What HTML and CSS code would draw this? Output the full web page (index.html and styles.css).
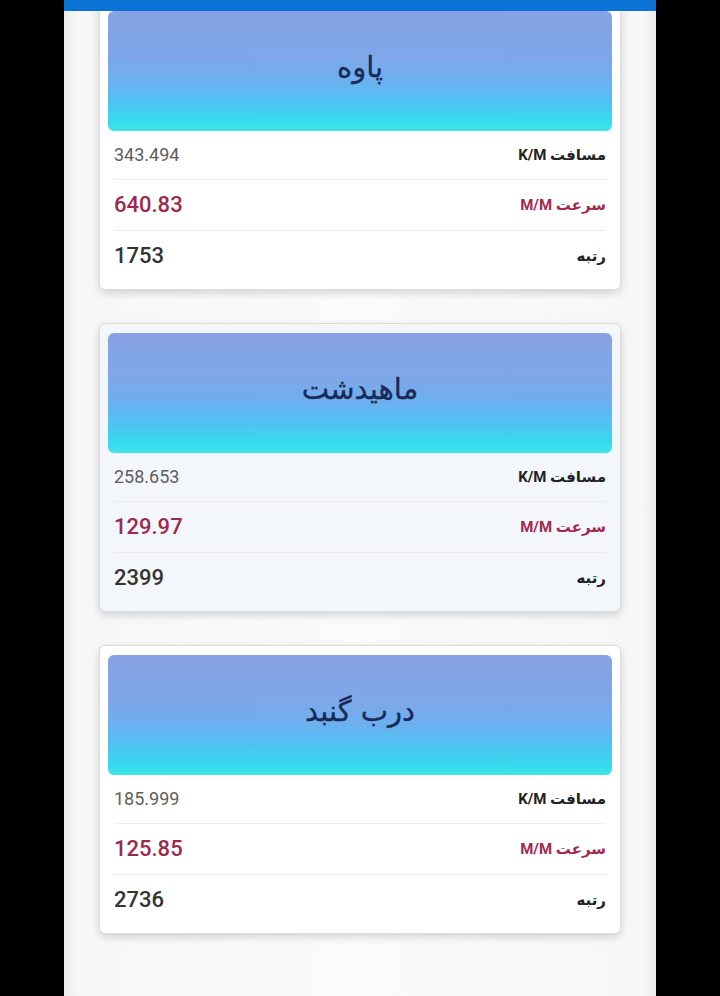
FILE: index.html
```html
<!DOCTYPE html>
<html lang="fa">
<head>
<meta charset="utf-8">
<title>رتبه‌بندی</title>
<link rel="stylesheet" href="styles.css">
</head>
<body>
<div class="screen">
  <div class="topbar"></div>
  <div class="list">
    <div class="card">
      <div class="card-head"><span class="title">پاوه</span></div>
      <div class="rows">
        <div class="row row-dist"><span class="label">مسافت K/M</span><span class="value">343.494</span></div>
        <div class="row row-speed"><span class="label">سرعت M/M</span><span class="value">640.83</span></div>
        <div class="row row-rank"><span class="label">رتبه</span><span class="value">1753</span></div>
      </div>
    </div>
    <div class="card card-active">
      <div class="card-head"><span class="title">ماهیدشت</span></div>
      <div class="rows">
        <div class="row row-dist"><span class="label">مسافت K/M</span><span class="value">258.653</span></div>
        <div class="row row-speed"><span class="label">سرعت M/M</span><span class="value">129.97</span></div>
        <div class="row row-rank"><span class="label">رتبه</span><span class="value">2399</span></div>
      </div>
    </div>
    <div class="card">
      <div class="card-head"><span class="title">درب گنبد</span></div>
      <div class="rows">
        <div class="row row-dist"><span class="label">مسافت K/M</span><span class="value">185.999</span></div>
        <div class="row row-speed"><span class="label">سرعت M/M</span><span class="value">125.85</span></div>
        <div class="row row-rank"><span class="label">رتبه</span><span class="value">2736</span></div>
      </div>
    </div>
  </div>
</div>
</body>
</html>
```

FILE: styles.css
```css
html, body {
  margin: 0;
  padding: 0;
  background: #000;
}

body {
  font-family: Roboto, "DejaVu Sans", sans-serif;
}

.screen {
  width: 592px;
  height: 996px;
  margin: 0 auto;
  background: linear-gradient(to right, #ececec 0px, #f7f7f7 14px, #fbfbfb 50%, #f7f7f7 calc(100% - 14px), #ececec 100%);
  position: relative;
  overflow: hidden;
}

.topbar {
  position: absolute;
  top: 0;
  left: 0;
  right: 0;
  height: 11px;
  background: #0b73d5;
  z-index: 5;
}

.list {
  padding: 1px 35px 0 35px;
  display: flex;
  flex-direction: column;
  gap: 33px;
}

.card {
  background: #fff;
  border: 1px solid #dcdcdc;
  border-radius: 6px;
  padding: 9px 8px 8px 8px;
  box-shadow: 0 3px 9px rgba(0, 0, 0, 0.16);
}

.card-active {
  background: #f3f6fb;
}

.card-head {
  height: 120px;
  border-radius: 6px;
  background: linear-gradient(to bottom, #87a2e4 0%, #7ea7e9 38%, #6cb0f0 58%, #4fc3f3 76%, #36dbef 92%, #3ee6e8 100%);
  display: flex;
  align-items: center;
  justify-content: center;
  padding-bottom: 8px;
  box-sizing: border-box;
}

.title {
  direction: rtl;
  font-family: "DejaVu Sans", sans-serif;
  font-size: 29px;
  color: #1a2956;
  -webkit-text-stroke: 0.3px #1a2956;
}

.rows {
  margin: 0 6px 0 6px;
}

.row {
  direction: rtl;
  display: flex;
  justify-content: space-between;
  align-items: center;
  padding: 12px 0;
}

.row + .row {
  border-top: 1px solid #ececec;
}

.label {
  font-family: Roboto, "DejaVu Sans", sans-serif;
  font-weight: 700;
  font-size: 15px;
  color: #222;
}

.value {
  direction: ltr;
  font-family: Roboto, sans-serif;
}

.row-dist {
  line-height: 24px;
}

.row-dist .value {
  font-size: 18px;
  color: #5e5e5e;
}

.row-speed,
.row-rank {
  line-height: 26px;
}

.row-speed .label {
  color: #a3294f;
}

.row-speed .value {
  font-size: 22px;
  font-weight: 500;
  color: #9b2a4e;
}

.row-rank .value {
  font-size: 22px;
  font-weight: 500;
  color: #333;
}
```
